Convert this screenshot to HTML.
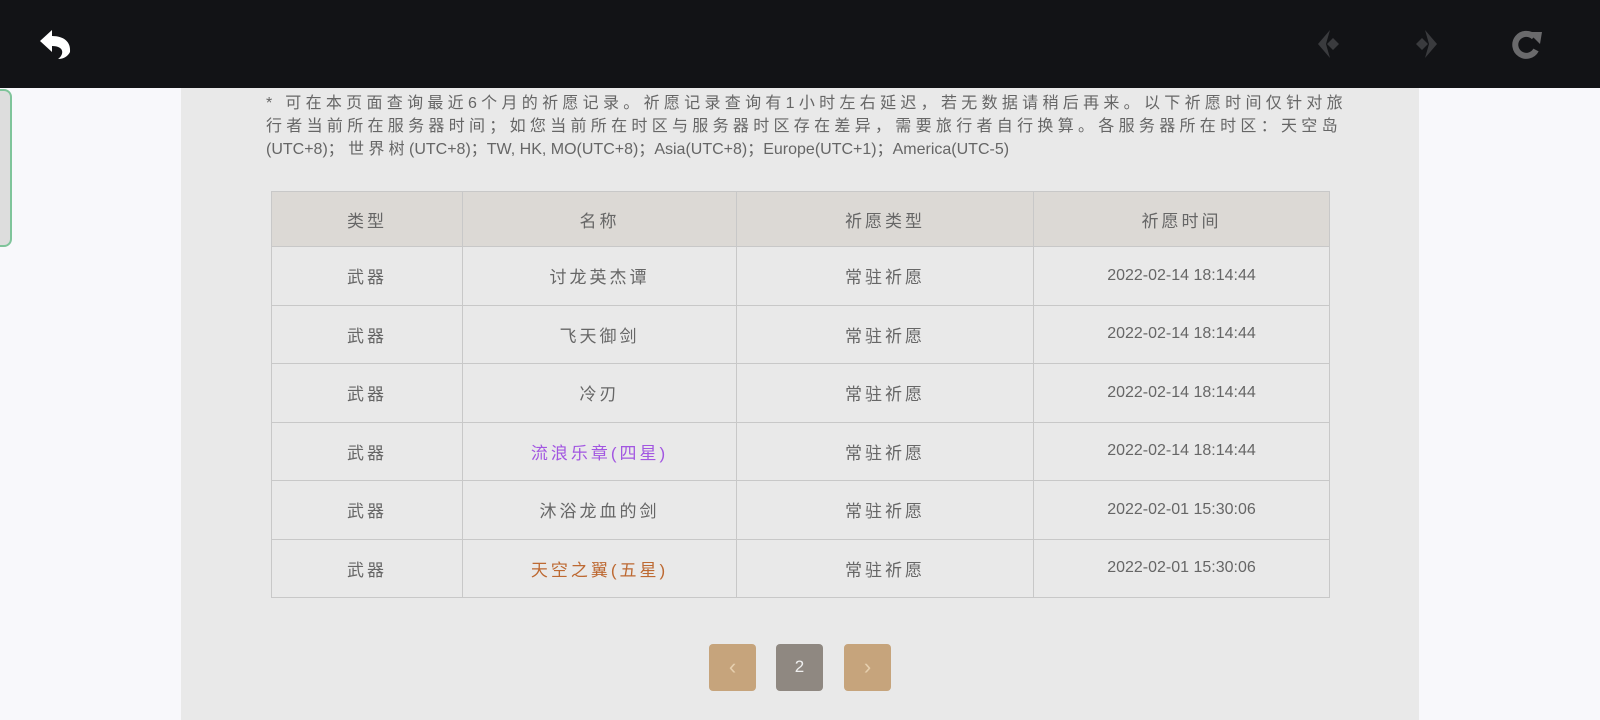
<!DOCTYPE html>
<html><head><meta charset="utf-8"><style>
*{margin:0;padding:0;box-sizing:border-box}
body{width:1600px;height:720px;overflow:hidden;background:#f8f8fb;font-family:"Liberation Sans","Noto Sans CJK SC",sans-serif;color:#666;position:relative}
.top{position:absolute;left:0;top:0;width:1600px;height:88px;background:#121316}
.panel{position:absolute;left:181px;top:88px;width:1238px;height:632px;background:#e9e9e9}
.tab{position:absolute;left:-2px;top:89px;width:14px;height:158px;border:2px solid #7fc49a;border-radius:0 8px 8px 0;background:#ddd}
.note{position:absolute;left:266px;top:92px;width:1100px;font-size:16px;line-height:23px;letter-spacing:4.3px;color:#666;white-space:nowrap}
.note .l{letter-spacing:0}
table{position:absolute;left:271px;top:191px;border-collapse:collapse;font-size:17px;letter-spacing:3px}
td,th{border:1px solid #c8c8c8;text-align:center;font-weight:normal;height:58.5px;color:#666;vertical-align:middle}
th{background:#dcd9d5;height:55px}
.num{letter-spacing:0;font-size:16px}
.pg{position:absolute;top:644px;width:47px;height:47px;border-radius:4px;background:#c6a47c;color:#e6cfae;font-size:22px;text-align:center;line-height:45px}
</style></head><body>
<div class="top">
<svg style="position:absolute;left:38px;top:26px" width="36" height="34" viewBox="0 0 36 34"><path d="M2 15 L14 4 L14 10 C26 10 33 16 32 26 C30 30 26 33 20 33 C26 29 27 20 14 20 L14 26 Z" fill="#fff"/></svg>
<svg style="position:absolute;left:1314px;top:28px" width="30" height="32" viewBox="0 0 30 32"><path d="M16 2 L4 16 L16 30 L12 16 Z M19 10 L25 16 L19 22 L13 16Z" fill="#3a3b3e"/></svg>
<svg style="position:absolute;left:1411px;top:28px" width="30" height="32" viewBox="0 0 30 32"><path d="M14 2 L26 16 L14 30 L18 16 Z M11 10 L17 16 L11 22 L5 16Z" fill="#3a3b3e"/></svg>
<svg style="position:absolute;left:1510px;top:28px" width="34" height="34" viewBox="0 0 34 34"><path d="M24 9 A11 11 0 1 0 26 22" fill="none" stroke="#6a6a6c" stroke-width="6"/><path d="M18 4 L32 4 L30 16 Z" fill="#6a6a6c"/></svg>
</div>
<div class="panel"></div>
<div class="tab"></div>
<div class="note">* 可在本页面查询最近6个月的祈愿记录。祈愿记录查询有1小时左右延迟，若无数据请稍后再来。以下祈愿时间仅针对旅<br>行者当前所在服务器时间；如您当前所在时区与服务器时区存在差异，需要旅行者自行换算。各服务器所在时区：天空岛<br><span class="l">(UTC+8)</span>；世界树<span class="l">(UTC+8)；TW, HK, MO(UTC+8)；Asia(UTC+8)；Europe(UTC+1)；America(UTC-5)</span></div>
<table>
<tr><th style="width:191px">类型</th><th style="width:274px">名称</th><th style="width:297px">祈愿类型</th><th style="width:296px">祈愿时间</th></tr>
<tr><td>武器</td><td>讨龙英杰谭</td><td>常驻祈愿</td><td class="num">2022-02-14 18:14:44</td></tr>
<tr><td>武器</td><td>飞天御剑</td><td>常驻祈愿</td><td class="num">2022-02-14 18:14:44</td></tr>
<tr><td>武器</td><td>冷刃</td><td>常驻祈愿</td><td class="num">2022-02-14 18:14:44</td></tr>
<tr><td>武器</td><td style="color:#a256e1">流浪乐章(四星)</td><td>常驻祈愿</td><td class="num">2022-02-14 18:14:44</td></tr>
<tr><td>武器</td><td>沐浴龙血的剑</td><td>常驻祈愿</td><td class="num">2022-02-01 15:30:06</td></tr>
<tr><td>武器</td><td style="color:#bd6932">天空之翼(五星)</td><td>常驻祈愿</td><td class="num">2022-02-01 15:30:06</td></tr>
</table>
<div class="pg" style="left:709px">‹</div>
<div class="pg" style="left:776px;background:#8f8881;color:#eee;font-size:17px">2</div>
<div class="pg" style="left:844px">›</div>
</body></html>
